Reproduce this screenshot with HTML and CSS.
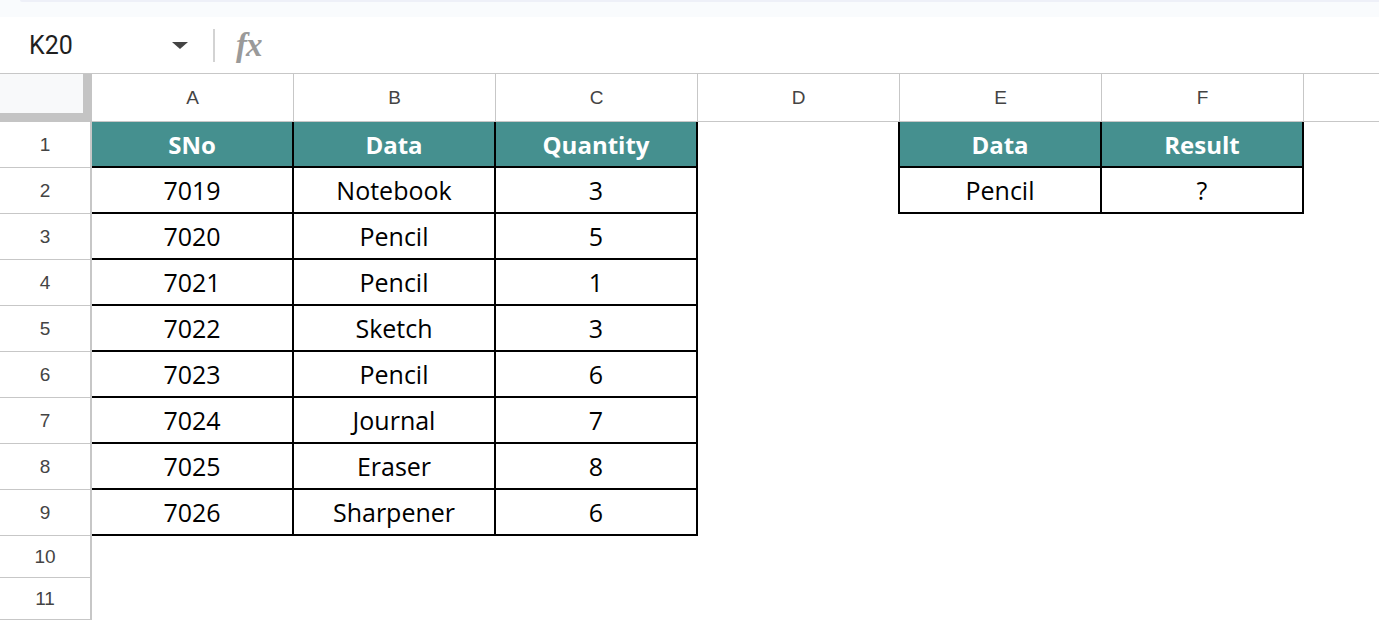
FILE: index.html
```html
<!DOCTYPE html>
<html lang="en">
<head>
    <meta charset="UTF-8">
    <title>Sheet</title>
    <link rel="stylesheet" href="styles.css">
</head>
<body>
    <div class="top-strip"><div class="tab-edge"></div></div>

    <div class="formula-bar">
        <div class="name-box">
            <span class="cell-ref">K20</span>
            <span class="caret"></span>
        </div>
        <div class="divider"></div>
        <div class="fx">fx</div>
    </div>

    <div class="sheet">
        <!-- column headers -->
        <div class="corner"></div>
        <div class="col-head">A</div>
        <div class="col-head">B</div>
        <div class="col-head">C</div>
        <div class="col-head">D</div>
        <div class="col-head">E</div>
        <div class="col-head">F</div>
        <div class="col-head last"></div>

        <!-- row 1 -->
        <div class="row-head">1</div>
        <div class="cell tb th">SNo</div>
        <div class="cell tb th">Data</div>
        <div class="cell tb th">Quantity</div>
        <div class="cell"></div>
        <div class="cell tb th lb">Data</div>
        <div class="cell tb th">Result</div>
        <div class="cell"></div>

        <!-- row 2 -->
        <div class="row-head">2</div>
        <div class="cell tb">7019</div>
        <div class="cell tb">Notebook</div>
        <div class="cell tb">3</div>
        <div class="cell"></div>
        <div class="cell tb lb">Pencil</div>
        <div class="cell tb">?</div>
        <div class="cell"></div>

        <!-- row 3 -->
        <div class="row-head">3</div>
        <div class="cell tb">7020</div>
        <div class="cell tb">Pencil</div>
        <div class="cell tb">5</div>
        <div class="cell wide"></div>

        <!-- row 4 -->
        <div class="row-head">4</div>
        <div class="cell tb">7021</div>
        <div class="cell tb">Pencil</div>
        <div class="cell tb">1</div>
        <div class="cell wide"></div>

        <!-- row 5 -->
        <div class="row-head">5</div>
        <div class="cell tb">7022</div>
        <div class="cell tb">Sketch</div>
        <div class="cell tb">3</div>
        <div class="cell wide"></div>

        <!-- row 6 -->
        <div class="row-head">6</div>
        <div class="cell tb">7023</div>
        <div class="cell tb">Pencil</div>
        <div class="cell tb">6</div>
        <div class="cell wide"></div>

        <!-- row 7 -->
        <div class="row-head">7</div>
        <div class="cell tb">7024</div>
        <div class="cell tb">Journal</div>
        <div class="cell tb">7</div>
        <div class="cell wide"></div>

        <!-- row 8 -->
        <div class="row-head">8</div>
        <div class="cell tb">7025</div>
        <div class="cell tb">Eraser</div>
        <div class="cell tb">8</div>
        <div class="cell wide"></div>

        <!-- row 9 -->
        <div class="row-head">9</div>
        <div class="cell tb">7026</div>
        <div class="cell tb">Sharpener</div>
        <div class="cell tb">6</div>
        <div class="cell wide"></div>

        <!-- rows 10, 11 -->
        <div class="row-head">10</div>
        <div class="cell full"></div>
        <div class="row-head">11</div>
        <div class="cell full"></div>
    </div>
</body>
</html>
```

FILE: styles.css
```css
*{
    margin: 0;
    padding: 0;
    box-sizing: border-box;
}

body{
    background-color: #fff;
    width: 1379px;
    height: 623px;
    overflow: hidden;
    font-family: 'Open Sans', sans-serif;
}

.top-strip{
    height: 17px;
    background-color: #f9fbfd;
    padding-left: 20px;
}

.tab-edge{
    height: 2px;
    background-color: #eef0f8;
    border-radius: 0 0 0 4px;
}

.formula-bar{
    height: 57px;
    display: flex;
    align-items: center;
    border-bottom: 1px solid #c7c7c7;
}

.name-box{
    width: 213px;
    display: flex;
    align-items: center;
    justify-content: space-between;
    padding-left: 29px;
    padding-right: 25px;
}

.cell-ref{
    font-family: Roboto, 'Liberation Sans', sans-serif;
    font-size: 25px;
    color: #1f1f1f;
}

.caret{
    width: 0;
    height: 0;
    border-left: 8px solid transparent;
    border-right: 8px solid transparent;
    border-top: 7px solid #444;
}

.divider{
    width: 2px;
    height: 33px;
    background-color: #d3d3d3;
}

.fx{
    margin-left: 21px;
    font-family: 'Liberation Serif', serif;
    font-style: italic;
    font-weight: 700;
    font-size: 33px;
    color: #9a9a9a;
    letter-spacing: -1px;
}

.sheet{
    display: grid;
    grid-template-columns: 92px repeat(6, 202px) 1fr;
    grid-template-rows: 48px repeat(9, 46px) 42px 42px;
}

.corner{
    background-color: #f8f9fa;
    border-right: 9px solid #c4c4c4;
    border-bottom: 9px solid #c4c4c4;
}

.col-head{
    display: flex;
    align-items: center;
    justify-content: center;
    border-right: 1px solid #c7c7c7;
    border-bottom: 1px solid #c7c7c7;
    font-family: 'Liberation Sans', Arial, sans-serif;
    font-size: 19px;
    color: #444;
}

.col-head.last{
    border-right: none;
}

.row-head{
    display: flex;
    align-items: center;
    justify-content: center;
    border-right: 2px solid #c7c7c7;
    border-bottom: 1px solid #c7c7c7;
    font-family: 'Liberation Sans', Arial, sans-serif;
    font-size: 19px;
    color: #444;
}

.cell{
    display: flex;
    align-items: center;
    justify-content: center;
    font-size: 25px;
    color: #000;
}

.cell.wide{
    grid-column: span 4;
}

.cell.full{
    grid-column: span 7;
}

.tb{
    border-right: 2px solid #000;
    border-bottom: 2px solid #000;
}

.lb{
    box-shadow: -2px 0 0 #000;
}

.th{
    background-color: #45908f;
    color: #fff;
    font-weight: 700;
    font-size: 24px;
}
```
